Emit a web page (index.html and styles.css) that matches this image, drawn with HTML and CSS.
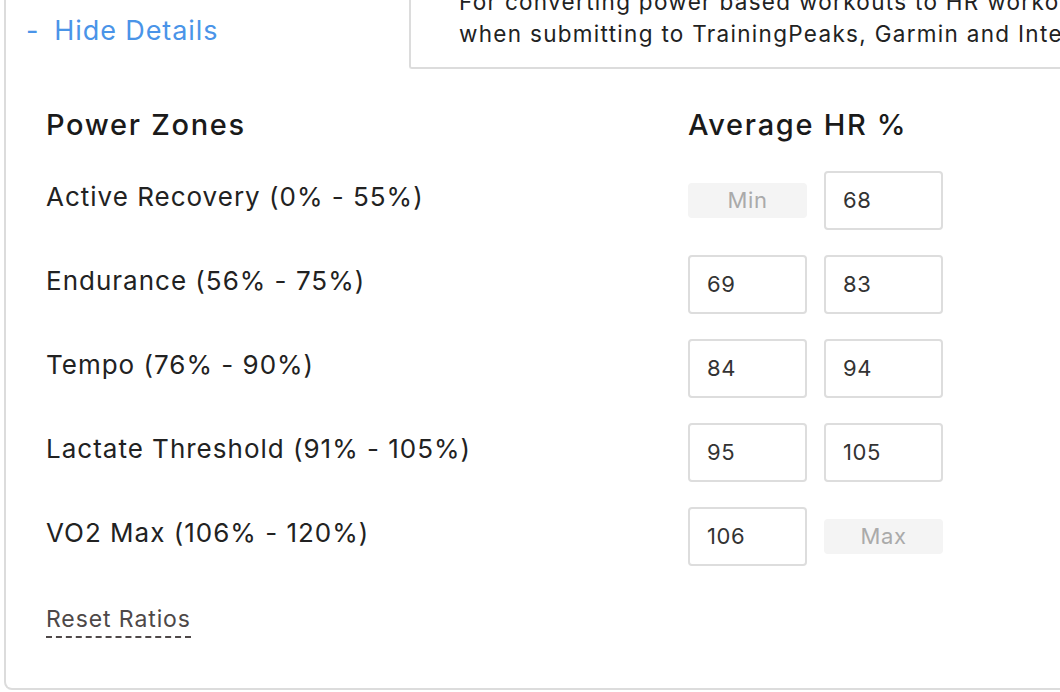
FILE: index.html
```html
<!DOCTYPE html>
<html>
<head>
<meta charset="utf-8">
<link rel="stylesheet" href="styles.css">
</head>
<body>
<div class="panel">
  <div class="tabs">
    <div class="tab-active"><span class="dash">-</span><span class="tab-label">Hide Details</span></div>
    <div class="notice">
      <div class="notice-text">For converting power based workouts to HR workouts<br>when submitting to TrainingPeaks, Garmin and Intervals.icu</div>
    </div>
  </div>
  <div class="content">
    <div class="row head-row">
      <div class="heading">Power Zones</div>
      <div class="heading">Average HR %</div>
    </div>
    <div class="row">
      <div class="label">Active Recovery (0% - 55%)</div>
      <div class="inputs"><div class="fixed">Min</div><div class="field">68</div></div>
    </div>
    <div class="row">
      <div class="label">Endurance (56% - 75%)</div>
      <div class="inputs"><div class="field">69</div><div class="field">83</div></div>
    </div>
    <div class="row">
      <div class="label">Tempo (76% - 90%)</div>
      <div class="inputs"><div class="field">84</div><div class="field">94</div></div>
    </div>
    <div class="row">
      <div class="label">Lactate Threshold (91% - 105%)</div>
      <div class="inputs"><div class="field">95</div><div class="field">105</div></div>
    </div>
    <div class="row">
      <div class="label">VO2 Max (106% - 120%)</div>
      <div class="inputs"><div class="field">106</div><div class="fixed">Max</div></div>
    </div>
    <div class="reset-wrap"><span class="reset">Reset Ratios</span></div>
  </div>
</div>
</body>
</html>
```
FILE: styles.css
```css
html, body {
  margin: 0;
  padding: 0;
  background: #ffffff;
  overflow: hidden;
  width: 1060px;
  height: 692px;
}
body {
  font-family: Inter, "Noto Sans", sans-serif;
  color: #1f1f1f;
}
.panel {
  margin-left: 4px;
  width: 1120px;
  height: 690px;
  box-sizing: border-box;
  border: 2px solid #dcdcdc;
  border-top: none;
  border-radius: 0 0 8px 8px;
  display: flex;
  flex-direction: column;
}
.tabs {
  display: flex;
  height: 69px;
}
.tab-active {
  width: 403px;
  padding-left: 21px;
  padding-top: 14px;
  box-sizing: border-box;
  font-size: 27px;
  letter-spacing: 0.9px;
  color: #4a94e8;
  display: flex;
  align-items: flex-start;
  gap: 15px;
}
.dash {
  margin-left: -1px;
}
.notice {
  flex: 1;
  border-left: 2px solid #dcdcdc;
  border-bottom: 2px solid #dcdcdc;
  border-bottom-left-radius: 3px;
  display: flex;
  flex-direction: column;
  justify-content: flex-end;
  overflow: hidden;
  padding-left: 48px;
  padding-bottom: 17px;
}
.notice-text {
  font-size: 22.5px;
  letter-spacing: 1.3px;
  line-height: 32px;
  color: #222;
  white-space: nowrap;
}
.content {
  padding: 38px 0 0 40px;
}
.row {
  display: grid;
  grid-template-columns: 642px auto;
  align-items: center;
  height: 84px;
}
.head-row {
  height: 42px;
  align-items: start;
  margin-bottom: 9px;
}
.heading {
  font-size: 29px;
  font-weight: 500;
  letter-spacing: 1.7px;
  color: #1a1a1a;
}
.label {
  font-size: 26px;
  letter-spacing: 1px;
  color: #222;
  padding-bottom: 8px;
}
.inputs {
  display: flex;
  align-items: center;
  gap: 17px;
}
.field {
  width: 119px;
  height: 59px;
  box-sizing: border-box;
  border: 2px solid #dddddd;
  border-radius: 4px;
  padding-left: 17px;
  display: flex;
  align-items: center;
  font-size: 22px;
  letter-spacing: 0.6px;
  color: #333;
}
.fixed {
  width: 119px;
  height: 35px;
  border-radius: 4px;
  background: #f4f4f4;
  color: #aaaaaa;
  font-size: 22px;
  letter-spacing: 0.6px;
  display: flex;
  align-items: center;
  justify-content: center;
}
.reset-wrap {
  margin-top: 27px;
}
.reset {
  font-size: 23px;
  letter-spacing: 0.9px;
  color: #4e4848;
  border-bottom: 2px dashed #4e4848;
  padding-bottom: 3px;
}
```
